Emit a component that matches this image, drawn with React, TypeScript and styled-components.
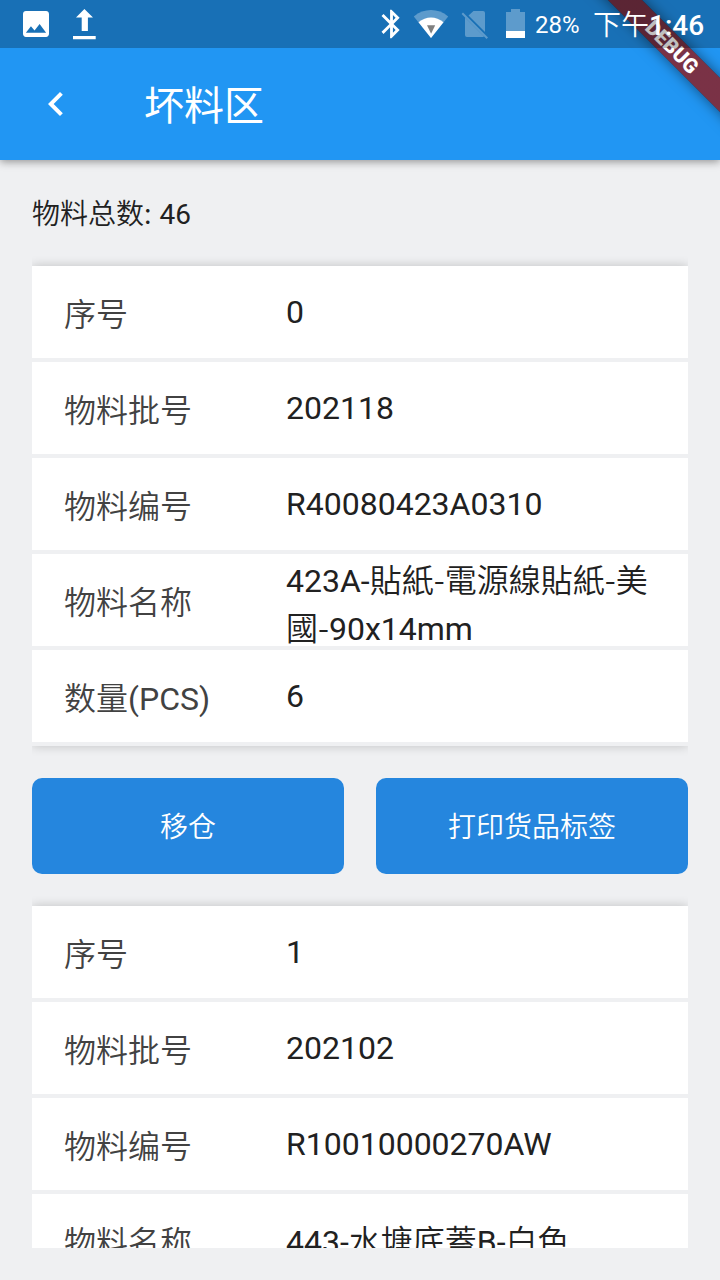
import React from 'react';
import styled, { createGlobalStyle } from 'styled-components';

const GlobalStyle = createGlobalStyle`
  * { box-sizing: border-box; }
  body {
    margin: 0;
    background: #eff0f2;
    font-family: Roboto, "Noto Sans CJK SC", sans-serif;
    color: #212121;
  }
`;

const Screen = styled.div`
  position: relative;
  display: flex;
  flex-direction: column;
  width: 720px;
  height: 1280px;
  overflow: hidden;
  background: #eff0f2;
`;

const Header = styled.header`
  flex: none;
  background: #2196f3;
  box-shadow: 0 2px 8px rgba(0, 0, 0, 0.38);
`;

const StatusBar = styled.div`
  position: relative;
  z-index: 2;
  display: flex;
  justify-content: space-between;
  height: 48px;
  background: rgba(0, 0, 0, 0.25);
  color: #fff;
`;

const StatusGroup = styled.div`
  display: flex;
  align-items: center;

  svg { display: block; flex: none; }
`;

const Battery = styled.span`
  width: 62px;
  padding-left: 4px;
  font-size: 24px;
  line-height: 48px;
  padding-top: 2px;
`;

const Clock = styled.span`
  width: 127px;
  font-size: 28px;
  font-weight: 350;
  line-height: 48px;
  white-space: nowrap;
  padding-top: 4px;

  b { font-weight: 500; }
`;

const AppBar = styled.div`
  display: flex;
  align-items: center;
  height: 112px;
  padding-left: 32px;
  color: #fff;
`;

const BackButton = styled.button`
  width: 48px;
  height: 48px;
  margin-right: 64px;
  padding: 0;
  border: 0;
  background: none;

  svg { display: block; }
`;

const Title = styled.h1`
  margin: 0;
  padding-top: 5px;
  font-size: 40px;
  font-weight: 400;
  line-height: 48px;
`;

const DebugBanner = styled.div`
  position: absolute;
  z-index: 1;
  top: 35px;
  right: -88px;
  width: 272px;
  height: 24px;
  transform: rotate(45deg);
  background:
    linear-gradient(rgba(183, 28, 28, 0.627), rgba(183, 28, 28, 0.627)),
    rgba(0, 0, 0, 0.42);
  box-shadow: 0 0 14px rgba(0, 0, 0, 0.5);
  color: #fff;
  font-size: 20.4px;
  font-weight: 900;
  line-height: 24px;
  text-align: center;
`;

const Body = styled.main`
  display: flex;
  flex-direction: column;
  flex: 1;
  min-height: 0;
  padding: 32px 32px;
`;

const Total = styled.div`
  flex: none;
  height: 58px;
  padding-top: 2px;
  font-size: 28px;
  line-height: 42px;
  word-spacing: 1px;
`;

const List = styled.div`
  flex: 1;
  min-height: 0;
  overflow: hidden;
  padding-top: 16px;
`;

const Card = styled.section`
  box-shadow: 0 0 10px rgba(0, 0, 0, 0.2);
`;

const Row = styled.div`
  display: flex;
  align-items: center;
  height: 96px;
  padding: 0 32px;
  border-bottom: 4px solid #eff0f2;
  background: #fff;
  font-size: 32px;
  line-height: 48px;
`;

const Label = styled.div`
  flex: none;
  width: 222px;
  padding-top: 6px;
  color: #424242;
`;

const Value = styled.div<{ $drop: number }>`
  flex: 1;
  min-width: 0;
  padding-top: ${(p) => p.$drop}px;
`;

const Cjk = styled.span`
  font-family: "Noto Sans CJK SC", sans-serif;
  font-weight: 350;
  line-height: 1;
`;

const Actions = styled.div`
  display: flex;
  gap: 32px;
  padding: 32px 0;
`;

const ActionButton = styled.button`
  flex: 1;
  height: 96px;
  padding: 4px 0 0;
  border: 0;
  border-radius: 10px;
  background: #2586de;
  color: #fff;
  font: 350 28px/42px Roboto, "Noto Sans CJK SC", sans-serif;
`;

const FADED = 'rgba(255,255,255,0.3)';

const records = [
  { no: '0', batch: '202118', code: 'R40080423A0310', name: '423A-貼紙-電源線貼紙-美國-90x14mm', qty: '6' },
  { no: '1', batch: '202102', code: 'R10010000270AW', name: '443-水塘底蓋B-白色', qty: '1' },
];

/* Ideographs, with the hyphen or colon that trails them, are set in the CJK face. */
function MixedText({ text }: { text: string }) {
  const runs = text.split(/([\u4e00-\u9fff]+[-:]?)/).filter(Boolean);
  return (
    <>
      {runs.map((run, i) =>
        /[\u4e00-\u9fff]/.test(run) ? <Cjk key={i}>{run}</Cjk> : run
      )}
    </>
  );
}

/* Wrapped names sit lower in their row than names on a single line. */
function valueDrop(value: string) {
  if (!/[\u4e00-\u9fff]/.test(value)) return 0;
  return value.length > 16 ? 10 : 4;
}

function Notifications() {
  return (
    <StatusGroup>
      <svg width="60" height="48" viewBox="0 0 60 48">
        <path
          transform="translate(18.67 6.67) scale(1.444)"
          fill="#fff"
          d="M21 19V5c0-1.100-.9-2-2-2H5c-1.100 0-2 .9-2 2v14c0 1.100.9 2 2 2h14c1.100 0 2-.9 2-2zM8.500 13.500l2.500 3.010L14.500 12l4.500 6H5l3.500-4.500z"
        />
      </svg>
      <svg width="40" height="48" viewBox="60 0 40 48">
        <path fill="#fff" d="M84.400 9L93 17.500H87.900V31H81.700V17.500H76zM73 36h22.700v3.300H73z" />
      </svg>
    </StatusGroup>
  );
}

function SystemIcons() {
  return (
    <>
      <svg width="34" height="48" viewBox="374 0 34 48">
        <path
          transform="translate(374.400 6.800) scale(1.425)"
          fill="#fff"
          d="M17.710 7.710L12 2h-1v7.590L6.410 5 5 6.410 10.590 12 5 17.590 6.410 19 11 14.410V22h1l5.710-5.710-4.300-4.290 4.300-4.290zM13 5.830l1.880 1.880L13 9.590V5.830zm1.880 10.460L13 18.170v-3.760l1.880 1.880z"
        />
      </svg>
      <svg width="46" height="48" viewBox="408 0 46 48">
        <path fill={FADED} d="M431 38L413.800 16.400C424 8 438 8 448.200 16.400z" />
        <path fill="#fff" d="M431 38L418.500 22.200C426 15.800 436 15.800 443.500 22.200z" />
        <path fill="#808080" d="M427 25.300h8.200l-4.100 8.500z" />
      </svg>
      <svg width="42" height="48" viewBox="454 0 42 48">
        <path fill={FADED} d="M473.500 11H483a2 2 0 0 1 2 2V32L468.500 15.500zM465 17.500L484 36.500 483 37H467a2 2 0 0 1-2-2z" />
        <path stroke={FADED} strokeWidth="2" d="M462.300 13.200L487.300 38.200" />
      </svg>
      <svg width="35" height="48" viewBox="496 0 35 48">
        <path fill={FADED} d="M511 9h9v3h5v19h-19V12h5z" />
        <path fill="#fff" d="M506 31h19v7h-19z" />
      </svg>
    </>
  );
}

function RecordCard({ record }: { record: (typeof records)[number] }) {
  const rows = [
    ['序号', record.no],
    ['物料批号', record.batch],
    ['物料编号', record.code],
    ['物料名称', record.name],
    ['数量(PCS)', record.qty],
  ];
  return (
    <Card>
      {rows.map(([label, value]) => (
        <Row key={label}>
          <Label><MixedText text={label} /></Label>
          <Value $drop={valueDrop(value)}><MixedText text={value} /></Value>
        </Row>
      ))}
    </Card>
  );
}

export default function App() {
  return (
    <Screen>
      <GlobalStyle />
      <Header>
        <StatusBar>
          <Notifications />
          <StatusGroup>
            <SystemIcons />
            <Battery>28%</Battery>
            <Clock>下午<b>1:46</b></Clock>
          </StatusGroup>
        </StatusBar>
        <AppBar>
          <BackButton aria-label="返回">
            <svg width="48" height="48" viewBox="0 0 24 24" fill="#fff">
              <path d="M15.410 7.410L14 6l-6 6 6 6 1.410-1.410L10.830 12z" />
            </svg>
          </BackButton>
          <Title>坏料区</Title>
        </AppBar>
      </Header>
      <DebugBanner>DEBUG</DebugBanner>
      <Body>
        <Total><MixedText text="物料总数: 46" /></Total>
        <List>
          {records.map((record) => (
            <React.Fragment key={record.no}>
              <RecordCard record={record} />
              <Actions>
                <ActionButton>移仓</ActionButton>
                <ActionButton>打印货品标签</ActionButton>
              </Actions>
            </React.Fragment>
          ))}
        </List>
      </Body>
    </Screen>
  );
}
